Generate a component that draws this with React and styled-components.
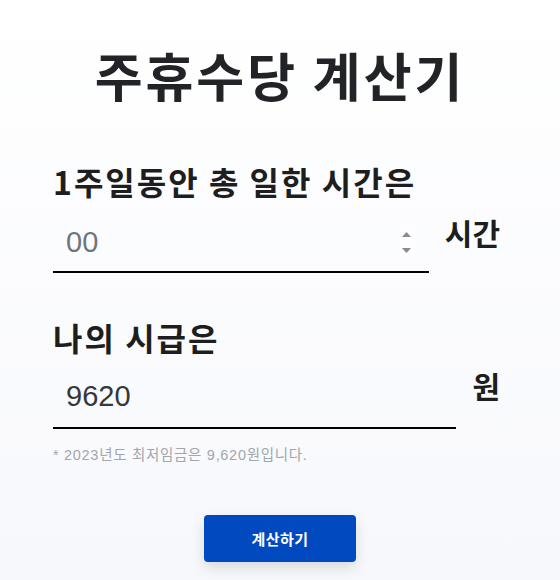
import styled, { createGlobalStyle } from "styled-components";

const GlobalStyle = createGlobalStyle`
  html, body {
    margin: 0;
    padding: 0;
  }
  body {
    background: linear-gradient(180deg, #ffffff 0%, #f7f8fc 100%);
    min-height: 580px;
    font-family: "Liberation Sans", "Noto Sans CJK KR", sans-serif;
    color: #222;
  }
`;

const Spinner = () => (
  <SpinBox>
    <svg width="9" height="5" viewBox="0 0 9 5">
      <polygon points="4.5,0 9,5 0,5" fill="#8a8a8a" />
    </svg>
    <svg width="9" height="5" viewBox="0 0 9 5">
      <polygon points="0,0 9,0 4.5,5" fill="#8a8a8a" />
    </svg>
  </SpinBox>
);

export default function App() {
  return (
    <>
      <GlobalStyle />
      <Page>
        <Title>주휴수당 계산기</Title>
        <Form>
          <Field>
            <Label>1주일동안 총 일한 시간은</Label>
            <Row>
              <InputLine $pad={10}>
                <NumberInput placeholder="00" />
                <Spinner />
              </InputLine>
              <Unit $shift={9}>시간</Unit>
            </Row>
          </Field>
          <Field $top={42}>
            <Label>나의 시급은</Label>
            <Row>
              <InputLine $pad={7}>
                <NumberInput defaultValue="9620" />
              </InputLine>
              <Unit $shift={6}>원</Unit>
            </Row>
            <Note>* 2023년도 최저임금은 9,620원입니다.</Note>
          </Field>
        </Form>
        <Submit>계산하기</Submit>
      </Page>
    </>
  );
}

const Page = styled.div`
  width: 560px;
  height: 580px;
  display: flex;
  flex-direction: column;
  align-items: center;
  box-sizing: border-box;
  padding-top: 40px;
`;

const Title = styled.h1`
  margin: 0;
  font-family: "Noto Sans CJK KR", sans-serif;
  font-size: 52px;
  font-weight: 700;
  line-height: 70px;
  color: #222326;
  letter-spacing: 3px;
`;

const Form = styled.div`
  width: 447px;
  margin-top: 49px;
  margin-left: -7px;
  display: flex;
  flex-direction: column;
`;

const Field = styled.div`
  display: flex;
  flex-direction: column;
  margin-top: ${(p) => p.$top || 0}px;
`;

const Label = styled.div`
  font-family: "Noto Sans CJK KR", sans-serif;
  font-size: 32px;
  font-weight: 700;
  line-height: 44px;
  letter-spacing: 2px;
  color: #1e1e20;
  white-space: nowrap;
`;

const Row = styled.div`
  display: flex;
  align-items: flex-start;
  gap: 16px;
`;

const InputLine = styled.div`
  flex: 1;
  min-width: 0;
  display: flex;
  align-items: center;
  box-sizing: border-box;
  height: 70px;
  border-bottom: 2px solid #000;
  padding: ${(p) => p.$pad}px 15px 0 13px;
`;

const NumberInput = styled.input`
  flex: 1;
  width: 0;
  min-width: 0;
  border: 0;
  outline: none;
  background: transparent;
  font-family: "Liberation Sans", "Noto Sans CJK KR", sans-serif;
  font-size: 29px;
  color: #34373c;
  padding: 0;

  &::placeholder {
    color: #6f757c;
  }
`;

const SpinBox = styled.div`
  display: flex;
  flex-direction: column;
  gap: 11px;
  align-items: center;
  padding: 5px 3px;
  background: #fdfdff;
`;

const Unit = styled.div`
  flex-shrink: 0;
  white-space: nowrap;
  font-family: "Noto Sans CJK KR", sans-serif;
  font-size: 30px;
  font-weight: 700;
  line-height: 40px;
  color: #1e1e20;
  margin-top: ${(p) => p.$shift || 0}px;
`;

const Note = styled.div`
  margin-top: 18px;
  font-family: "Liberation Sans", "Noto Sans CJK KR", sans-serif;
  font-size: 14.5px;
  line-height: 16px;
  letter-spacing: 0.7px;
  color: #a3a6ac;
`;

const Submit = styled.button`
  margin-top: 52px;
  width: 152px;
  height: 47px;
  border: 0;
  border-radius: 4px;
  background: #0049bf;
  color: #fff;
  font-family: "Noto Sans CJK KR", sans-serif;
  font-size: 15px;
  font-weight: 700;
  letter-spacing: 0.5px;
  box-shadow: 0 6px 14px rgba(0, 0, 0, 0.12);
  cursor: pointer;
`;
